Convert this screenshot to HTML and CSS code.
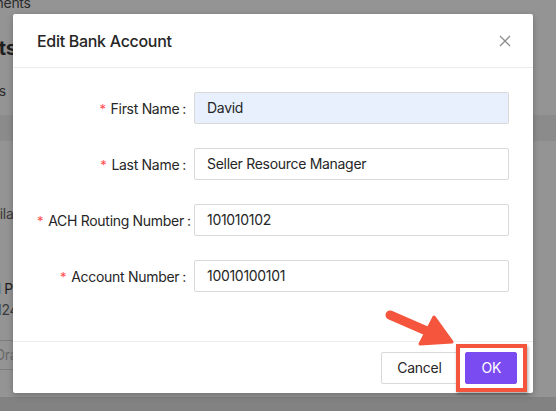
FILE: index.html
```html
<!DOCTYPE html>
<html>
<head>
<meta charset="utf-8">
<link rel="stylesheet" href="styles.css">
</head>
<body>
<div class="page">
  <div class="pg-top">
    <div class="pg-crumb">Payments</div>
    <div class="pg-title">Payments</div>
    <div class="pg-sub">Status</div>
  </div>
  <div class="pg-band"></div>
  <div class="pg-mid">
    <div class="pg-line1">Similar</div>
    <div class="pg-line2">Bad Pay</div>
    <div class="pg-line3">1241</div>
    <div class="pg-input">Draw</div>
  </div>
  <div class="pg-bottom"></div>
</div>

<div class="modal">
  <div class="modal-header">
    <div class="modal-title">Edit Bank Account</div>
    <svg class="close" width="12" height="12" viewBox="0 0 12 12"><path d="M1 1 L11 11 M11 1 L1 11" stroke="#8c8c8c" stroke-width="1.3" fill="none"/></svg>
  </div>
  <div class="modal-body">
    <div class="row">
      <label class="label"><span class="req">*</span>First Name</label>
      <div class="input autofill">David</div>
    </div>
    <div class="row">
      <label class="label"><span class="req">*</span>Last Name</label>
      <div class="input">Seller Resource Manager</div>
    </div>
    <div class="row">
      <label class="label"><span class="req">*</span>ACH Routing Number</label>
      <div class="input">101010102</div>
    </div>
    <div class="row">
      <label class="label"><span class="req">*</span>Account Number</label>
      <div class="input">10010100101</div>
    </div>
  </div>
  <div class="modal-footer">
    <button class="btn">Cancel</button>
    <button class="btn primary">OK</button>
  </div>
</div>

<div class="highlight"></div>
<svg class="arrow" width="90" height="50" viewBox="0 0 90 50">
  <path d="M7 6 L46 23" stroke="#f4553c" stroke-width="9" stroke-linecap="round" fill="none"/>
  <path d="M51 8 L69 33 L37 35 Z" fill="#f4553c" stroke="#f4553c" stroke-width="3" stroke-linejoin="round"/>
</svg>
</body>
</html>
```

FILE: styles.css
```css
html, body {
  margin: 0;
  padding: 0;
}
body {
  width: 556px;
  height: 411px;
  overflow: hidden;
  font-family: "Inter", "Helvetica Neue", Arial, sans-serif;
  letter-spacing: -0.3px;
  background: #939393;
  position: relative;
}
.page {
  display: flex;
  flex-direction: column;
  height: 411px;
}
.pg-top {
  height: 115px;
  background: #949494;
  position: relative;
}
.pg-crumb {
  position: relative;
  top: -6px;
  margin-left: -32px;
  font-size: 14px;
  color: #2c2c2c;
}
.pg-title {
  margin-left: -78px;
  margin-top: 19px;
  font-size: 20px;
  font-weight: 700;
  color: #1f1f1f;
}
.pg-sub {
  margin-left: -34px;
  margin-top: 22px;
  font-size: 14px;
  color: #2c2c2c;
}
.pg-band {
  height: 26px;
  background: #8b8b8b;
}
.pg-mid {
  flex: 1;
  background: #949494;
  display: flex;
  flex-direction: column;
}
.pg-line1 {
  margin-top: 64px;
  margin-left: -24px;
  font-size: 14px;
  color: #3a3a3a;
}
.pg-line2 {
  margin-top: 58px;
  margin-left: -24px;
  font-size: 14px;
  color: #1f1f1f;
}
.pg-line3 {
  margin-top: 4px;
  margin-left: -4px;
  font-size: 14px;
  color: #3a3a3a;
}
.pg-input {
  margin-top: 22px;
  margin-left: -10px;
  width: 120px;
  height: 30px;
  box-sizing: border-box;
  border: 1px solid #7d7d7d;
  line-height: 28px;
  padding-left: 4px;
  font-size: 14px;
  color: #6a6a6a;
}
.pg-bottom {
  height: 14px;
  background: #828282;
}

.modal {
  position: absolute;
  left: 13px;
  top: 14px;
  width: 520px;
  height: 379px;
  background: #fff;
  border-radius: 2px;
  box-shadow: 0 2px 6px rgba(0,0,0,0.25);
  display: flex;
  flex-direction: column;
}
.modal-header {
  height: 54px;
  box-sizing: border-box;
  padding: 0 24px;
  border-bottom: 1px solid #ececec;
  display: flex;
  align-items: center;
  justify-content: space-between;
}
.modal-title {
  font-size: 16px;
  font-weight: 500;
  color: #262626;
}
.close {
  margin-right: -2px;
}
.modal-body {
  flex: 1;
  padding: 24px 24px 0;
}
.row {
  display: flex;
  align-items: center;
  height: 32px;
  margin-bottom: 24px;
}
.label {
  width: 157px;
  flex: none;
  text-align: right;
  white-space: nowrap;
  font-size: 14px;
  color: #262626;
}
.label::after {
  content: ":";
  margin: 0 8px 0 3px;
}
.req {
  color: #ff4d4f;
  font-size: 13px;
  margin-right: 5px;
}
.input {
  flex: 1;
  height: 32px;
  box-sizing: border-box;
  border: 1px solid #d9d9d9;
  border-radius: 2px;
  padding: 0 12px;
  line-height: 30px;
  font-size: 14px;
  color: #262626;
}
.autofill {
  background: #e8f0fe;
}
.modal-footer {
  height: 52px;
  box-sizing: border-box;
  border-top: 1px solid #ececec;
  padding: 0 16px;
  display: flex;
  align-items: center;
  justify-content: flex-end;
  gap: 8px;
}
.btn {
  height: 32px;
  padding: 0 15px;
  border: 1px solid #d9d9d9;
  border-radius: 2px;
  background: #fff;
  font-family: inherit;
  letter-spacing: inherit;
  font-size: 14px;
  color: #262626;
}
.primary {
  background: #7b4bf2;
  border-color: #7b4bf2;
  color: #fff;
  padding: 0 15px;
}
.highlight {
  position: absolute;
  left: 456px;
  top: 344px;
  width: 71px;
  height: 48px;
  box-sizing: border-box;
  border: 4px solid #f4553c;
  box-shadow: 1px 2px 3px rgba(0,0,0,0.35);
}
.arrow {
  position: absolute;
  left: 383px;
  top: 309px;
}
```
